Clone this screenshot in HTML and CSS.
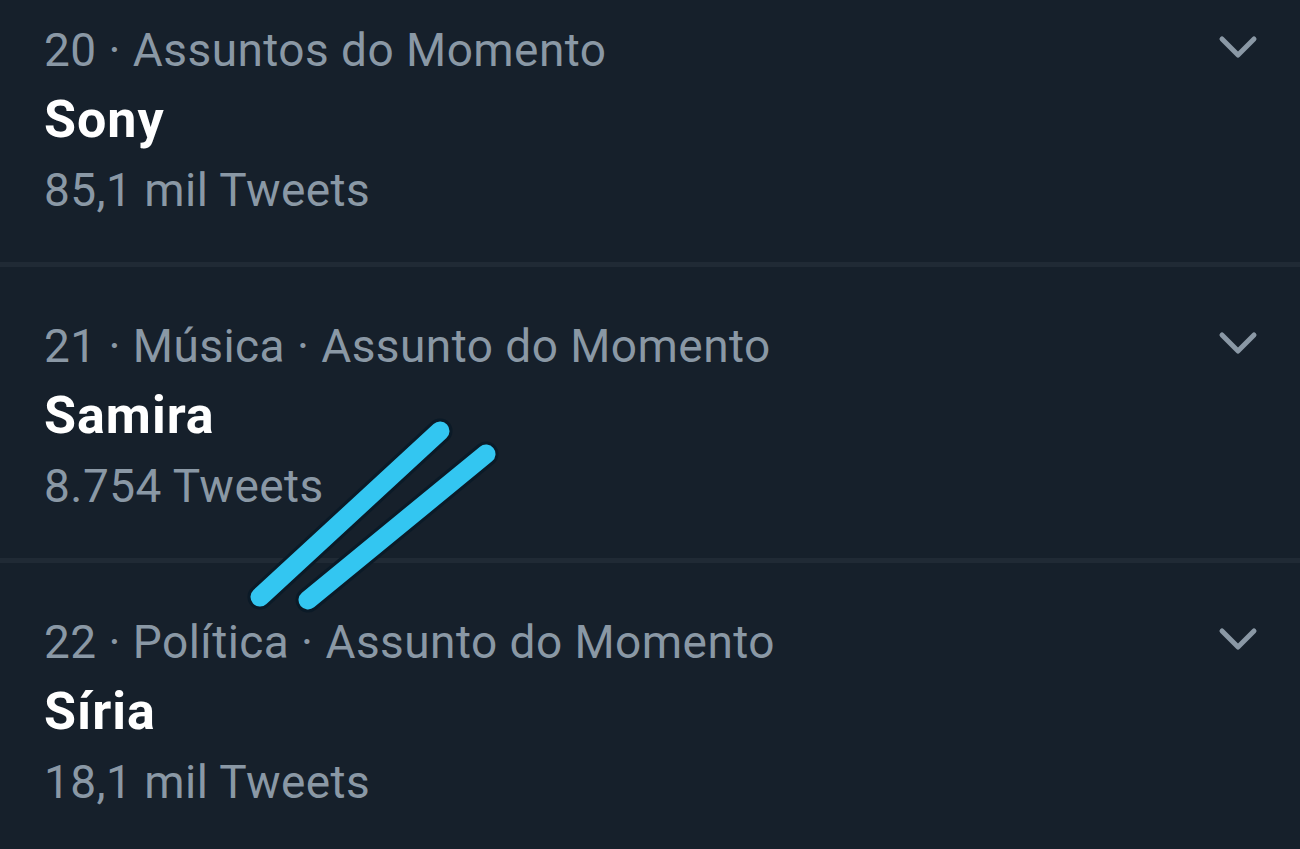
FILE: index.html
```html
<!DOCTYPE html>
<html lang="pt-BR">
<head>
    <meta charset="UTF-8">
    <meta name="viewport" content="width=device-width, initial-scale=1.0">
    <title>Assuntos do Momento</title>
    <link rel="stylesheet" href="styles.css">
</head>
<body>

<div class="trends">
    <div class="trend">
        <div class="trend-info">
            <div class="trend-meta">20 · Assuntos do Momento</div>
            <div class="trend-name">Sony</div>
            <div class="trend-count">85,1 mil Tweets</div>
        </div>
        <svg class="chevron" width="40" height="28" viewBox="0 0 40 28">
            <polyline points="4,6 20,22 36,6" />
        </svg>
    </div>

    <div class="trend">
        <div class="trend-info">
            <div class="trend-meta">21 · Música · Assunto do Momento</div>
            <div class="trend-name">Samira</div>
            <div class="trend-count">8.754 Tweets</div>
        </div>
        <svg class="chevron" width="40" height="28" viewBox="0 0 40 28">
            <polyline points="4,6 20,22 36,6" />
        </svg>
    </div>

    <div class="trend">
        <div class="trend-info">
            <div class="trend-meta">22 · Política · Assunto do Momento</div>
            <div class="trend-name">Síria</div>
            <div class="trend-count">18,1 mil Tweets</div>
        </div>
        <svg class="chevron" width="40" height="28" viewBox="0 0 40 28">
            <polyline points="4,6 20,22 36,6" />
        </svg>
    </div>
</div>

<!-- hand drawn marks over the screenshot -->
<svg class="marks" width="1300" height="849" viewBox="0 0 1300 849">
    <g class="mark-outline">
        <line x1="260" y1="597" x2="440" y2="431" />
        <line x1="308" y1="600" x2="486" y2="454" />
    </g>
    <g class="mark">
        <line x1="260" y1="597" x2="440" y2="431" />
        <line x1="308" y1="600" x2="486" y2="454" />
    </g>
</svg>

</body>
</html>
```

FILE: styles.css
```css
body {
    margin: 0;
    background-color: #16202b;
    font-family: Roboto, "Liberation Sans", sans-serif;
    overflow: hidden;
}
.trends {
    margin-top: -29px;
}
.trend {
    display: flex;
    justify-content: space-between;
    align-items: flex-start;
    padding: 44px 42px 37px 44px;
    border-bottom: 5px solid #202a35;
}
.trend-meta,
.trend-count {
    font-size: 46px;
    line-height: 70px;
    letter-spacing: 0.45px;
    color: #8a98a5;
}
.trend-name {
    font-size: 52px;
    line-height: 70px;
    letter-spacing: 1px;
    font-weight: bold;
    color: #ffffff;
}
.chevron {
    margin-top: 18px;
}
.chevron polyline {
    fill: none;
    stroke: #8a98a5;
    stroke-width: 5;
    stroke-linecap: round;
    stroke-linejoin: round;
}
.marks {
    position: absolute;
    top: 0;
    left: 0;
    pointer-events: none;
}
.mark-outline line {
    stroke: #0b1a27;
    stroke-width: 25;
    stroke-linecap: round;
}
.mark line {
    stroke: #33c6f1;
    stroke-width: 19;
    stroke-linecap: round;
}
```
